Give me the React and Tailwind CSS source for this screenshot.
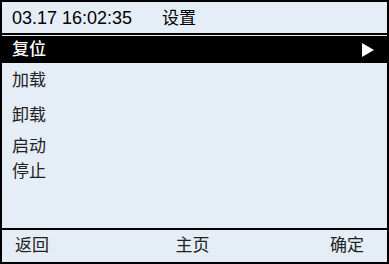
const items = [
  { label: "加载", h: "h-[36px]" },
  { label: "卸载", h: "h-[34px]" },
  { label: "启动", h: "h-[28px]" },
  { label: "停止", h: "h-[22px]" },
];

export default function App() {
  return (
    <div
      className="w-[389px] h-[264px] bg-[#e5edf7] border-2 border-black flex flex-col text-black"
      style={{ fontFamily: '"Liberation Sans", "Noto Sans CJK SC", sans-serif' }}
    >
      <div className="h-[33px] shrink-0 border-b-2 border-black flex items-center pl-[10px] pt-[2px]">
        <span className="text-[18px] w-[150px]">03.17 16:02:35</span>
        <span className="text-[17px]">设置</span>
      </div>

      <div className="flex-1 flex flex-col pt-[1px]">
        <div className="h-[27px] bg-black text-white flex items-center justify-between pl-[10px] pr-[13px]">
          <span className="text-[17px] font-medium">复位</span>
          <svg width="12" height="14" viewBox="0 0 12 14">
            <polygon points="0,0 12,7 0,14" fill="white" />
          </svg>
        </div>
        {items.map((item) => (
          <div key={item.label} className={`${item.h} flex items-center pl-[10px] text-[17px] text-[#222]`}>
            {item.label}
          </div>
        ))}
      </div>

      <div className="h-[34px] shrink-0 border-t-2 border-black flex items-center justify-between pl-[13px] pr-[23px] text-[17px] text-[#222]">
        <span>返回</span>
        <span className="pl-[6px]">主页</span>
        <span>确定</span>
      </div>
    </div>
  );
}
